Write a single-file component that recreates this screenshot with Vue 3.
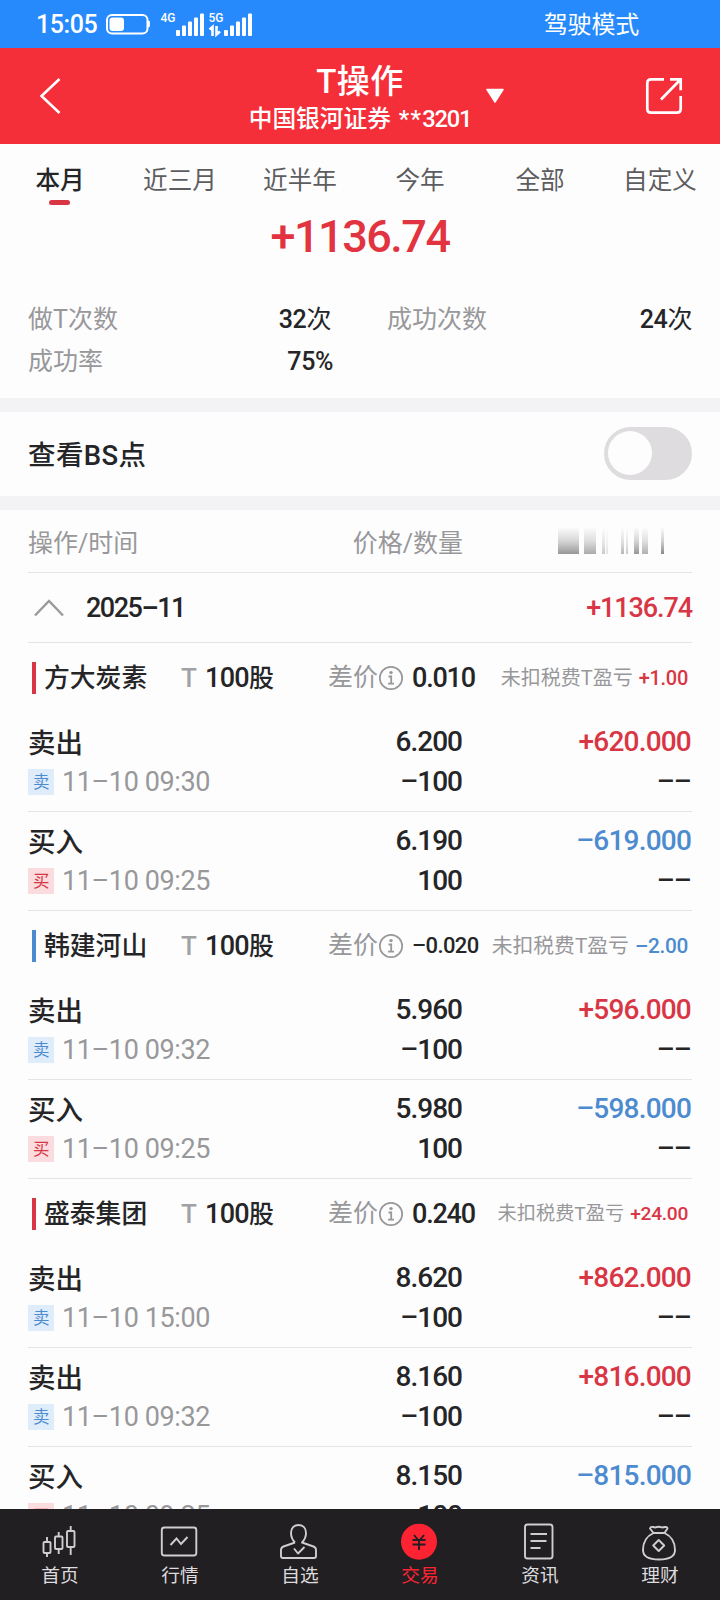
<template>
  <div class="app">
    <div class="status">
      <span class="clock">15:05</span>
      <svg class="status-icons" width="148" height="28" viewBox="0 0 148 28">
        <rect x="1" y="5" width="40.500" height="18.500" rx="5" fill="none" stroke="#fff" stroke-width="2" />
        <rect x="3.500" y="7.500" width="14.500" height="13.500" rx="3" fill="#fff" />
        <path d="M42.700 12v4" stroke="#fff" stroke-width="2.400" stroke-linecap="round" />
        <text x="54.500" y="11.600" class="net">4G</text>
        <text x="102.500" y="11.600" class="net">5G</text>
        <g fill="#fff">
          <rect v-for="(h, i) in signal" :key="'a' + i" :x="70 + i * 6" :y="26 - h" width="4" :height="h" rx="1" />
          <rect v-for="(h, i) in signal" :key="'b' + i" :x="118 + i * 6" :y="26 - h" width="4" :height="h" rx="1" />
        </g>
        <path d="M103.500 19.500l3-2.500v9M110.500 16v8.500l3.500-3" fill="none" stroke="#fff" stroke-width="2.600" />
      </svg>
      <span class="mode">驾驶模式</span>
    </div>

    <header class="header">
      <svg class="back" width="24" height="38" viewBox="0 0 24 38">
        <path d="M21.500 2L3.500 19l18 17" fill="none" stroke="#fff" stroke-width="2.600" />
      </svg>
      <div class="titles">
        <div class="title">T操作</div>
        <div class="account">中国银河证券<span class="account-no"><span class="stars">**</span>3201</span></div>
      </div>
      <svg class="caret" width="20" height="16" viewBox="0 0 20 16">
        <path d="M2 1.500h16L10 14z" fill="#fff" stroke="#fff" stroke-width="1.500" stroke-linejoin="round" />
      </svg>
      <svg class="share" width="38" height="38" viewBox="0 0 38 38">
        <g fill="none" stroke="#fff" stroke-width="2.700">
          <path d="M19 2.300H6Q2.300 2.300 2.300 6v26q0 3.700 3.700 3.700h26q3.700 0 3.700-3.700V19" />
          <path d="M16 22.500L35 3M25 2.300h10.700v11" />
        </g>
      </svg>
    </header>

    <nav class="tabs">
      <div v-for="(tab, i) in tabs" :key="tab" class="tab" :class="{ active: i === activeTab }" @click="activeTab = i">
        {{ tab }}
      </div>
    </nav>

    <div class="total">+1136.74</div>

    <div class="stats">
      <span class="stat-label">做T次数</span>
      <span class="stat-value">32<i>次</i></span>
      <span class="stat-label second">成功次数</span>
      <span class="stat-value">24<i>次</i></span>
      <span class="stat-label">成功率</span>
      <span class="stat-value percent">75%</span>
    </div>

    <div class="band"></div>

    <div class="switch-row">
      <span>查看BS点</span>
      <div class="switch" :class="{ on: showPoints }" @click="showPoints = !showPoints">
        <div class="knob"></div>
      </div>
    </div>

    <div class="band"></div>

    <main class="list">
      <div class="list-head">
        <span>操作/时间</span>
        <span class="right">价格/数量</span>
        <svg class="masked" width="135" height="30" viewBox="0 0 135 30">
          <defs>
            <linearGradient id="fade" x1="0" y1="0" x2="0" y2="1">
              <stop offset="0" stop-color="#777" stop-opacity="0" />
              <stop offset="0.500" stop-color="#777" stop-opacity="0.350" />
              <stop offset="1" stop-color="#666" stop-opacity="0.850" />
            </linearGradient>
          </defs>
          <rect v-for="bar in maskBars" :key="bar.x" :x="bar.x" y="1" :width="bar.w" height="27" :opacity="bar.o" fill="url(#fade)" />
        </svg>
      </div>

      <div class="month">
        <svg width="30" height="18" viewBox="0 0 30 18">
          <path d="M1 16.500L15 2l14 14.500" fill="none" stroke="#9a9a9c" stroke-width="2.400" />
        </svg>
        <span class="month-name">2025–11</span>
        <span class="month-total">+1136.74</span>
      </div>

      <section v-for="group in groups" :key="group.name">
        <div class="group-head">
          <div class="stock" :class="group.color"><span>{{ group.name }}</span></div>
          <div class="t-mark">T</div>
          <div class="shares">100<span>股</span></div>
          <div class="diff">
            <span class="diff-label">差价</span>
            <svg width="26" height="26" viewBox="0 0 26 26">
              <circle cx="13" cy="13" r="11.200" fill="none" stroke="#98989b" stroke-width="1.700" />
              <circle cx="13" cy="7.600" r="1.700" fill="#98989b" />
              <path d="M10.500 11.500h2.700v7M10 18.700h6" fill="none" stroke="#98989b" stroke-width="1.800" />
            </svg>
            <span class="diff-value" :class="{ small: group.diff.length > 5 }">{{ group.diff }}</span>
          </div>
          <div class="profit" :class="group.size">
            未扣税费T盈亏<b :class="group.color">{{ group.profit }}</b>
          </div>
        </div>
        <div v-for="(row, i) in group.rows" :key="i" class="row">
          <div>
            <div class="action">{{ row.sell ? "卖出" : "买入" }}</div>
            <div class="time">
              <span class="tag" :class="row.sell ? 'blue' : 'red'">{{ row.sell ? "卖" : "买" }}</span>
              11–10 {{ row.time }}
            </div>
          </div>
          <div class="num">
            <div>{{ row.price }}</div>
            <div>{{ row.sell ? "–100" : "100" }}</div>
          </div>
          <div class="num amount">
            <div :class="row.sell ? 'red' : 'blue'">{{ row.amount }}</div>
            <div>––</div>
          </div>
        </div>
      </section>
    </main>

    <footer class="bottom">
      <div class="item">
        <svg width="40" height="40" viewBox="0 0 40 40">
          <g fill="none" stroke="#cfcdd0" stroke-width="1.900">
            <rect x="4.500" y="20" width="7" height="11" rx="1" />
            <path d="M8 15v5M8 31v4" />
            <rect x="16" y="14.500" width="7.500" height="12.500" rx="1" />
            <path d="M19.700 10v4.500M19.700 27v5" />
            <rect x="28" y="9" width="7.500" height="16" rx="1" />
            <path d="M31.700 4v5M31.700 25v8" />
          </g>
        </svg>
        <span>首页</span>
      </div>
      <div class="item">
        <svg width="40" height="40" viewBox="0 0 40 40">
          <g fill="none" stroke="#cfcdd0" stroke-width="1.900">
            <rect x="2.800" y="5.500" width="34.500" height="28" rx="2.500" />
            <path d="M11.500 23l6-6.500 4.500 5.500 6.500-7" />
          </g>
        </svg>
        <span>行情</span>
      </div>
      <div class="item">
        <svg width="40" height="40" viewBox="0 0 40 40">
          <g fill="none" stroke="#cfcdd0" stroke-width="1.900" stroke-linejoin="round">
            <path d="M16 20.500c-3-3-4-6-4-9.500 0-5 3-8 7.500-8s7.500 3 7.500 8c0 3.500-1 6.500-4 9.500l11.500 4q2.500 1 2.500 3.500v6q0 2-2 2H4q-2 0-2-2v-6q0-2.500 2.500-3.500L16 20.500" />
            <path d="M15 26.500l4 5 6.500-6.500" />
          </g>
        </svg>
        <span>自选</span>
      </div>
      <div class="item current">
        <svg width="40" height="40" viewBox="0 0 40 40">
          <circle cx="20" cy="19.700" r="18" fill="#fe2332" />
          <path d="M15 13l5 6 5-6M13.500 18h13M13.500 22.500h13M20 19v9" fill="none" stroke="#211f22" stroke-width="1.900" />
        </svg>
        <span>交易</span>
      </div>
      <div class="item">
        <svg width="40" height="40" viewBox="0 0 40 40">
          <g fill="none" stroke="#cfcdd0" stroke-width="1.900">
            <rect x="6" y="2.500" width="27.500" height="34" rx="2.500" />
            <path d="M11.500 12h16.500M11.500 19h16M11.500 26h10" />
          </g>
        </svg>
        <span>资讯</span>
      </div>
      <div class="item">
        <svg width="40" height="40" viewBox="0 0 40 40">
          <g fill="none" stroke="#cfcdd0" stroke-width="1.900" stroke-linejoin="round">
            <path d="M14.500 11L11 6.500Q11.500 4.500 14 5l2.500.5Q19.500 4 23 5.500l3-.5q2.500-.3 2.500 1.500L25.500 11z" />
            <path d="M14.500 11C7 14.500 4 21 4 28q0 9.500 16 9.500T36 28c0-7-3-13.500-10.500-17" />
            <path d="M19.700 18l5.500 5.500-5.500 5.500-5.500-5.500z" />
          </g>
        </svg>
        <span>理财</span>
      </div>
    </footer>
  </div>
</template>

<script setup>
import { ref } from "vue";

const tabs = ["本月", "近三月", "近半年", "今年", "全部", "自定义"];
const activeTab = ref(0);
const showPoints = ref(false);

const signal = [6, 10.5, 14.5, 18.5, 22.5];

const maskBars = [
  { x: 1, w: 21, o: 0.8 },
  { x: 27, w: 12, o: 0.65 },
  { x: 45, w: 3, o: 0.4 },
  { x: 49, w: 2, o: 0.2 },
  { x: 64, w: 3, o: 0.55 },
  { x: 69, w: 2, o: 0.4 },
  { x: 77, w: 5, o: 0.8 },
  { x: 85, w: 6, o: 0.6 },
  { x: 104, w: 3, o: 0.9 },
];

const groups = ref([
  {
    name: "方大炭素",
    color: "red",
    diff: "0.010",
    profit: "+1.00",
    size: "md",
    rows: [
      { sell: true, time: "09:30", price: "6.200", amount: "+620.000" },
      { sell: false, time: "09:25", price: "6.190", amount: "–619.000" },
    ],
  },
  {
    name: "韩建河山",
    color: "blue",
    diff: "–0.020",
    profit: "–2.00",
    size: "lg",
    rows: [
      { sell: true, time: "09:32", price: "5.960", amount: "+596.000" },
      { sell: false, time: "09:25", price: "5.980", amount: "–598.000" },
    ],
  },
  {
    name: "盛泰集团",
    color: "red",
    diff: "0.240",
    profit: "+24.00",
    size: "sm",
    rows: [
      { sell: true, time: "15:00", price: "8.620", amount: "+862.000" },
      { sell: true, time: "09:32", price: "8.160", amount: "+816.000" },
      { sell: false, time: "09:25", price: "8.150", amount: "–815.000" },
    ],
  },
]);
</script>

<style>
body {
  background: #fdfdfd;
}
</style>

<style scoped>
.app {
  display: flex;
  flex-direction: column;
  width: 720px;
  height: 1600px;
  overflow: hidden;
  background: #fdfdfd;
  color: #252527;
  font-family: Roboto, "Noto Sans CJK SC", sans-serif;
}

.app > * {
  flex: none;
  box-sizing: border-box;
}

.red {
  color: #d93645;
}

.blue {
  color: #4d8bd0;
}

.status {
  display: flex;
  align-items: center;
  height: 48px;
  padding: 0 81px 0 36px;
  background: #268afc;
  color: #fff;
}

.clock {
  width: 70px;
  padding-top: 1px;
  font-size: 25px;
  font-weight: 500;
  letter-spacing: -0.4px;
}

.net {
  font-size: 12px;
  font-weight: 500;
  fill: #fff;
}

.mode {
  margin-left: auto;
  padding-top: 1px;
  font-size: 24px;
  line-height: 48px;
  letter-spacing: -0.2px;
}

.header {
  display: flex;
  align-items: center;
  height: 96px;
  padding: 0 37px 0 38px;
  background: #f52f39;
  color: #fff;
}

.titles {
  width: 226px;
  margin-left: 185px;
  padding-top: 5px;
  text-align: center;
  white-space: nowrap;
}

.title {
  font-size: 33px;
  font-weight: 500;
  line-height: 40px;
  letter-spacing: 0.5px;
}

.account {
  font-size: 23.7px;
  font-weight: 500;
  line-height: 34px;
}

.account-no {
  margin-left: 8px;
  letter-spacing: -1.2px;
}

.stars {
  letter-spacing: 1.2px;
}

.caret {
  margin-left: 12px;
}

.share {
  margin-left: auto;
}

.tabs {
  display: grid;
  grid-template-columns: repeat(6, 120px);
  height: 64px;
}

.tab {
  display: flex;
  flex-direction: column;
  align-items: center;
  font-size: 24.6px;
  line-height: 36px;
  padding-top: 19px;
  color: #5d5d60;
}

.tab.active {
  color: #252527;
  font-weight: 500;
}

.tab.active::after {
  content: "";
  width: 21px;
  height: 5px;
  margin: 1px 1px 0 0;
  border-radius: 3px;
  background: #d93645;
}

.total {
  height: 92px;
  padding-top: 1px;
  font-size: 45px;
  font-weight: 500;
  line-height: 56px;
  letter-spacing: -1.5px;
  text-align: center;
  color: #e23340;
}

.stats {
  display: grid;
  grid-template-columns: 140px 163px 200px 161px;
  grid-auto-rows: 42px;
  height: 98px;
  padding: 0 28px;
  font-size: 25px;
  line-height: 40px;
}

.stat-label {
  color: #98989b;
}

.stat-label.second {
  padding-left: 56px;
}

.stat-value {
  font-size: 25px;
  font-weight: 500;
  letter-spacing: -0.4px;
  text-align: right;
}

.stat-value i {
  font-style: normal;
  font-weight: 400;
}

.percent {
  margin-right: -2px;
}

.band {
  height: 14px;
  background: #f3f2f5;
}

.switch-row {
  display: flex;
  align-items: center;
  justify-content: space-between;
  height: 84px;
  padding: 0 28px 2px;
  font-size: 27.5px;
  font-weight: 500;
  letter-spacing: 0.4px;
}

.switch {
  width: 88px;
  height: 53px;
  box-sizing: border-box;
  padding: 4px;
  border-radius: 27px;
  background: #dedcdf;
}

.switch.on {
  padding-left: 40px;
  background: #d93645;
}

.knob {
  width: 44px;
  height: 44px;
  border-radius: 50%;
  background: #fdfdfd;
}

.list {
  height: 999px;
  padding: 0 28px;
  overflow: hidden;
}

.list-head {
  display: grid;
  grid-template-columns: 200px 235px 94px 135px;
  align-items: center;
  box-sizing: border-box;
  height: 63px;
  padding-bottom: 1px;
  border-bottom: 1px solid #e5e5e7;
  font-size: 25px;
  color: #98989b;
}

.right {
  text-align: right;
}

.masked {
  grid-column: 4;
}

.month {
  display: flex;
  align-items: center;
  height: 69px;
  padding-left: 6px;
  border-bottom: 1px solid #e5e5e7;
  font-size: 27px;
  font-weight: 500;
}

.month-name {
  margin-left: 22px;
  letter-spacing: -1.5px;
}

.month-total {
  margin-left: auto;
  letter-spacing: -1.1px;
  color: #d93645;
}

.group-head {
  display: grid;
  grid-template-columns: 149px 24px 123px 160px 1fr;
  align-items: center;
  height: 70px;
  padding: 0 4px;
  line-height: 32px;
  white-space: nowrap;
}

.stock {
  border-left: 4px solid;
  padding-left: 8px;
  font-size: 25.8px;
  font-weight: 500;
}

.stock span {
  color: #252527;
}

.t-mark {
  font-size: 26px;
  font-weight: 500;
  color: #a2a2a5;
}

.shares {
  font-size: 27px;
  font-weight: 500;
  letter-spacing: -0.7px;
}

.shares span {
  font-size: 25px;
}

.diff {
  display: flex;
  align-items: center;
}

.diff-label {
  font-size: 25px;
  color: #98989b;
}

.diff-value {
  margin-left: 8px;
  font-size: 27px;
  font-weight: 500;
  letter-spacing: -1.2px;
}

.diff-value.small {
  font-size: 22px;
  letter-spacing: -0.6px;
}

.profit {
  justify-self: end;
  color: #98989b;
}

.profit b {
  margin-left: 6px;
  font-weight: 500;
  letter-spacing: -0.3px;
}

.profit.sm {
  font-size: 19.2px;
}

.profit.md {
  font-size: 20px;
}

.profit.lg {
  font-size: 20.8px;
}

.row {
  display: grid;
  grid-template-columns: 1fr 199px 229px;
  box-sizing: border-box;
  height: 99px;
  padding: 9px 1px 0 0;
  border-bottom: 1px solid #e5e5e7;
}

.action {
  font-size: 27.5px;
  font-weight: 500;
  line-height: 40px;
  padding-top: 2px;
}

.time {
  display: flex;
  align-items: center;
  height: 36px;
  font-size: 27px;
  letter-spacing: -0.4px;
  color: #98989b;
}

.tag {
  width: 26px;
  height: 26px;
  margin-right: 8px;
  font-size: 16.5px;
  line-height: 27px;
  text-align: center;
}

.tag.blue {
  background: #dfedfb;
}

.tag.red {
  background: #fbdcde;
}

.num {
  font-size: 28px;
  font-weight: 500;
  line-height: 40px;
  letter-spacing: -1px;
  text-align: right;
}

.amount {
  letter-spacing: -0.8px;
}

.bottom {
  display: grid;
  grid-template-columns: repeat(6, 120px);
  height: 91px;
  background: #211f22;
  color: #dddbde;
}

.item {
  display: flex;
  flex-direction: column;
  align-items: center;
  padding-top: 13px;
  font-size: 18.7px;
  line-height: 28px;
}

.item svg {
  margin-left: -2px;
}

.current {
  color: #fe2332;
}
</style>
